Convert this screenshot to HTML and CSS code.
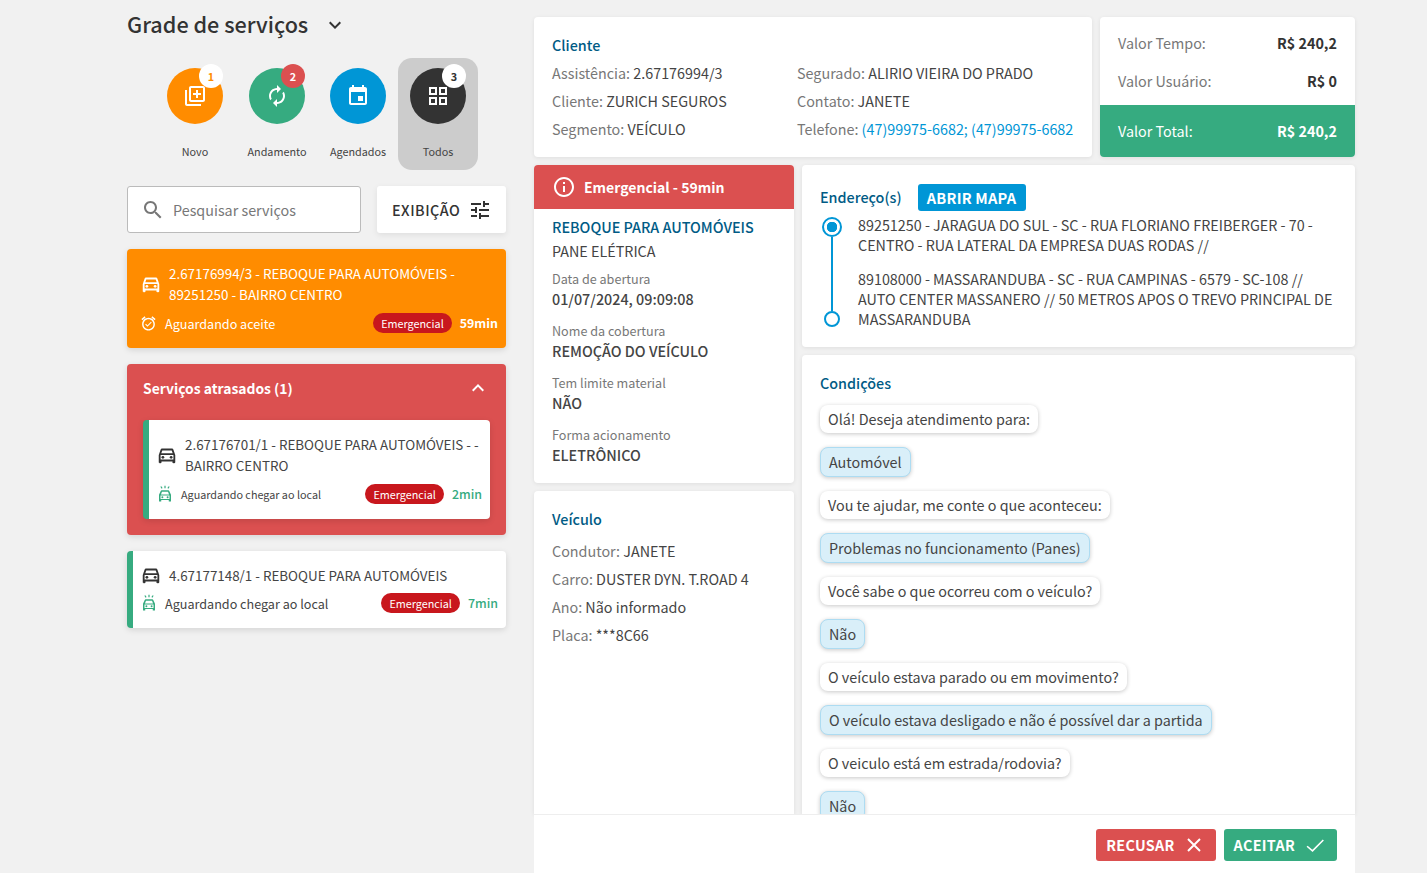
FILE: index.html
```html
<!DOCTYPE html>
<html lang="pt-BR">
<head>
<meta charset="utf-8">
<title>Grade de serviços</title>
<link rel="stylesheet" href="styles.css">
</head>
<body>
<div class="app">
  <aside class="side">
    <div class="side-title">
      <h1>Grade de serviços</h1>
      <svg class="ic ic-chev" viewBox="0 0 24 24"><path d="M7.41 8.59 12 13.17l4.59-4.58L18 10l-6 6-6-6z"/></svg>
    </div>
    <div class="tabs">
      <div class="tab">
        <div class="circle c-orange">
          <svg class="ic ic-tab" viewBox="0 0 24 24"><path d="M4 6H2v14c0 1.1.9 2 2 2h14v-2H4V6zm16-4H8c-1.1 0-2 .9-2 2v12c0 1.1.9 2 2 2h12c1.1 0 2-.9 2-2V4c0-1.1-.9-2-2-2zm0 14H8V4h12v12zm-7-2h2v-3h3V9h-3V6h-2v3h-3v2h3z"/></svg>
          <span class="count count-orange">1</span>
        </div>
        <span class="tab-label">Novo</span>
      </div>
      <div class="tab">
        <div class="circle c-green">
          <svg class="ic ic-tab" viewBox="0 0 24 24"><path d="M12 6v3l4-4-4-4v3c-4.42 0-8 3.58-8 8 0 1.57.46 3.03 1.24 4.26L6.7 14.8c-.45-.83-.7-1.79-.7-2.8 0-3.31 2.69-6 6-6zm6.76 1.74L17.3 9.2c.44.84.7 1.79.7 2.8 0 3.31-2.69 6-6 6v-3l-4 4 4 4v-3c4.42 0 8-3.58 8-8 0-1.57-.46-3.03-1.24-4.26z"/></svg>
          <span class="count count-red">2</span>
        </div>
        <span class="tab-label">Andamento</span>
      </div>
      <div class="tab">
        <div class="circle c-blue">
          <svg class="ic ic-tab" viewBox="0 0 24 24"><path d="M17 12h-5v5h5v-5zM16 1v2H8V1H6v2H5c-1.11 0-1.99.9-1.99 2L3 19c0 1.1.89 2 2 2h14c1.1 0 2-.9 2-2V5c0-1.1-.9-2-2-2h-1V1h-2zm3 18H5V8h14v11z"/></svg>
        </div>
        <span class="tab-label">Agendados</span>
      </div>
      <div class="tab tab-active">
        <div class="circle c-dark">
          <svg class="ic ic-tab" viewBox="0 0 24 24"><path d="M3 3v8h8V3H3zm6 6H5V5h4v4zm-6 4v8h8v-8H3zm6 6H5v-4h4v4zm4-16v8h8V3h-8zm6 6h-4V5h4v4zm-6 4v8h8v-8h-8zm6 6h-4v-4h4v4z"/></svg>
          <span class="count count-dark">3</span>
        </div>
        <span class="tab-label">Todos</span>
      </div>
    </div>
    <div class="tools">
      <div class="search">
        <svg class="ic ic-search" viewBox="0 0 24 24"><path d="M15.5 14h-.79l-.28-.27C15.41 12.59 16 11.11 16 9.5 16 5.91 13.09 3 9.5 3S3 5.91 3 9.5 5.91 16 9.5 16c1.61 0 3.09-.59 4.23-1.57l.27.28v.79l5 4.99L20.49 19l-4.99-5zm-6 0C7.01 14 5 11.99 5 9.5S7.01 5 9.5 5 14 7.01 14 9.5 11.99 14 9.5 14z"/></svg>
        <span>Pesquisar serviços</span>
      </div>
      <div class="view-btn">
        <span>EXIBIÇÃO</span>
        <svg class="ic ic-tune" viewBox="0 0 24 24"><path d="M3 17v2h6v-2H3zM3 5v2h10V5H3zm10 16v-2h8v-2h-8v-2h-2v6h2zM7 9v2H3v2h4v2h2V9H7zm14 4v-2H11v2h10zm-6-4h2V7h4V5h-4V3h-2v6z"/></svg>
      </div>
    </div>

    <div class="svc svc-orange">
      <div class="svc-top">
        <svg class="ic ic-car" viewBox="0 0 24 24"><path d="M18.92 6.01C18.72 5.42 18.16 5 17.5 5h-11c-.66 0-1.21.42-1.42 1.01L3 12v8c0 .55.45 1 1 1h1c.55 0 1-.45 1-1v-1h12v1c0 .55.45 1 1 1h1c.55 0 1-.45 1-1v-8l-2.08-5.99zM6.85 7h10.29l1.08 3.11H5.77L6.85 7zM19 17H5v-5h14v5z"/><circle cx="7.5" cy="14.5" r="1.5"/><circle cx="16.5" cy="14.5" r="1.5"/></svg>
        <p class="svc-text">2.67176994/3 - REBOQUE PARA AUTOMÓVEIS - 89251250 - BAIRRO CENTRO</p>
      </div>
      <div class="svc-bot">
        <svg class="ic ic-status" viewBox="0 0 24 24"><path d="M22 5.72l-4.6-3.86-1.29 1.53 4.6 3.86L22 5.72zM7.88 3.39L6.6 1.86 2 5.71l1.29 1.53 4.59-3.85zM12 4c-4.97 0-9 4.03-9 9s4.02 9 9 9c4.97 0 9-4.03 9-9s-4.03-9-9-9zm0 16c-3.87 0-7-3.13-7-7s3.13-7 7-7 7 3.13 7 7-3.13 7-7 7zm-1.46-5.47L8.41 12.4l-1.06 1.06 3.18 3.18 6-6-1.06-1.06-4.93 4.95z"/></svg>
        <span class="status">Aguardando aceite</span>
        <span class="pill">Emergencial</span>
        <span class="mins">59min</span>
      </div>
    </div>

    <div class="late">
      <div class="late-head">
        <span>Serviços atrasados (1)</span>
        <svg class="ic ic-chev-w" viewBox="0 0 24 24"><path d="M12 8l-6 6 1.41 1.41L12 10.83l4.59 4.58L18 14z"/></svg>
      </div>
      <div class="svc svc-white svc-nested">
        <div class="svc-top">
          <svg class="ic ic-car" viewBox="0 0 24 24"><path d="M18.92 6.01C18.72 5.42 18.16 5 17.5 5h-11c-.66 0-1.21.42-1.42 1.01L3 12v8c0 .55.45 1 1 1h1c.55 0 1-.45 1-1v-1h12v1c0 .55.45 1 1 1h1c.55 0 1-.45 1-1v-8l-2.08-5.99zM6.85 7h10.29l1.08 3.11H5.77L6.85 7zM19 17H5v-5h14v5z"/><circle cx="7.5" cy="14.5" r="1.5"/><circle cx="16.5" cy="14.5" r="1.5"/></svg>
          <p class="svc-text">2.67176701/1 - REBOQUE PARA AUTOMÓVEIS - - BAIRRO CENTRO</p>
        </div>
        <div class="svc-bot">
          <svg class="ic ic-status ic-green" viewBox="0 0 24 24"><path d="M11.2 1h1.6v3.200h-1.600zM5.800 2.400l1.300-.9 1.700 2.600-1.300.9zM15.200 4.100l1.700-2.600 1.300.9-1.700 2.600zM17.700 8.100C17.500 7.500 17 7 16.300 7H7.700C7 7 6.500 7.500 6.300 8.100L4 13v8.500c0 .3.200.500.500.500h2c.3 0 .500-.200.500-.500V20h10v1.500c0 .3.200.500.500.500h2c.3 0 .500-.200.500-.500V13l-2.300-4.900zM8 9h8l1.400 3.500H6.600L8 9zM18 18.500H6V14h12v4.500z"/><circle cx="8.500" cy="16.200" r="1.300"/><circle cx="15.500" cy="16.200" r="1.300"/></svg>
          <span class="status status-sm">Aguardando chegar ao local</span>
          <span class="pill">Emergencial</span>
          <span class="mins mins-green">2min</span>
        </div>
      </div>
    </div>

    <div class="svc svc-white svc-single">
      <div class="svc-top">
        <svg class="ic ic-car" viewBox="0 0 24 24"><path d="M18.92 6.01C18.72 5.42 18.16 5 17.5 5h-11c-.66 0-1.21.42-1.42 1.01L3 12v8c0 .55.45 1 1 1h1c.55 0 1-.45 1-1v-1h12v1c0 .55.45 1 1 1h1c.55 0 1-.45 1-1v-8l-2.08-5.99zM6.85 7h10.29l1.08 3.11H5.77L6.85 7zM19 17H5v-5h14v5z"/><circle cx="7.5" cy="14.5" r="1.5"/><circle cx="16.5" cy="14.5" r="1.5"/></svg>
        <p class="svc-text">4.67177148/1 - REBOQUE PARA AUTOMÓVEIS</p>
      </div>
      <div class="svc-bot">
        <svg class="ic ic-status ic-green" viewBox="0 0 24 24"><path d="M11.2 1h1.6v3.200h-1.600zM5.800 2.400l1.300-.9 1.700 2.600-1.300.9zM15.200 4.100l1.700-2.600 1.300.9-1.700 2.600zM17.700 8.100C17.500 7.500 17 7 16.300 7H7.700C7 7 6.500 7.500 6.300 8.100L4 13v8.500c0 .3.200.500.500.500h2c.3 0 .500-.200.500-.500V20h10v1.500c0 .3.200.500.500.500h2c.3 0 .500-.200.500-.500V13l-2.300-4.900zM8 9h8l1.400 3.500H6.600L8 9zM18 18.500H6V14h12v4.500z"/><circle cx="8.500" cy="16.200" r="1.300"/><circle cx="15.500" cy="16.200" r="1.300"/></svg>
        <span class="status">Aguardando chegar ao local</span>
        <span class="pill">Emergencial</span>
        <span class="mins mins-green">7min</span>
      </div>
    </div>
  </aside>

  <main class="main">
    <div class="row-top">
      <section class="card client">
        <h2 class="title">Cliente</h2>
        <div class="client-grid">
          <div class="line"><span class="lbl">Assistência:</span> 2.67176994/3</div>
          <div class="line"><span class="lbl">Segurado:</span> ALIRIO VIEIRA DO PRADO</div>
          <div class="line"><span class="lbl">Cliente:</span> ZURICH SEGUROS</div>
          <div class="line"><span class="lbl">Contato:</span> JANETE</div>
          <div class="line"><span class="lbl">Segmento:</span> VEÍCULO</div>
          <div class="line"><span class="lbl">Telefone:</span> <span class="phone">(47)99975-6682; (47)99975-6682</span></div>
        </div>
      </section>
      <section class="card values">
        <div class="val-rows">
          <div class="val-row"><span class="lbl">Valor Tempo:</span><b>R$ 240,2</b></div>
          <div class="val-row"><span class="lbl">Valor Usuário:</span><b>R$ 0</b></div>
        </div>
        <div class="val-total"><span>Valor Total:</span><b>R$ 240,2</b></div>
      </section>
    </div>

    <div class="row-body">
      <div class="col-left">
        <section class="card info">
          <div class="info-head">
            <svg class="ic ic-info" viewBox="0 0 24 24"><path d="M11 7h2v2h-2zm0 4h2v6h-2zm1-9C6.480 2 2 6.480 2 12s4.480 10 10 10 10-4.480 10-10S17.520 2 12 2zm0 18c-4.410 0-8-3.590-8-8s3.590-8 8-8 8 3.590 8 8-3.590 8-8 8z"/></svg>
            <span>Emergencial - 59min</span>
          </div>
          <div class="info-body">
            <div class="svc-name">REBOQUE PARA AUTOMÓVEIS</div>
            <div class="svc-sub">PANE ELÉTRICA</div>
            <div class="field"><div class="f-lbl">Data de abertura</div><div class="f-val">01/07/2024, 09:09:08</div></div>
            <div class="field"><div class="f-lbl">Nome da cobertura</div><div class="f-val">REMOÇÃO DO VEÍCULO</div></div>
            <div class="field"><div class="f-lbl">Tem limite material</div><div class="f-val">NÃO</div></div>
            <div class="field"><div class="f-lbl">Forma acionamento</div><div class="f-val">ELETRÔNICO</div></div>
          </div>
        </section>
        <section class="card vehicle">
          <h2 class="title">Veículo</h2>
          <div class="line"><span class="lbl">Condutor:</span> JANETE</div>
          <div class="line"><span class="lbl">Carro:</span> DUSTER DYN. T.ROAD 4</div>
          <div class="line"><span class="lbl">Ano:</span> Não informado</div>
          <div class="line"><span class="lbl">Placa:</span> ***8C66</div>
        </section>
      </div>

      <div class="col-right">
        <section class="card address">
          <div class="addr-head">
            <h2 class="title">Endereço(s)</h2>
            <span class="map-btn">ABRIR MAPA</span>
          </div>
          <div class="addr-list">
            <div class="track">
              <span class="dot dot-on"></span>
              <span class="track-line"></span>
              <span class="dot"></span>
            </div>
            <div class="addr-texts">
              <p>89251250 - JARAGUA DO SUL - SC - RUA FLORIANO FREIBERGER - 70 - CENTRO - RUA LATERAL DA EMPRESA DUAS RODAS //</p>
              <p>89108000 - MASSARANDUBA - SC - RUA CAMPINAS - 6579 - SC-108 // AUTO CENTER MASSANERO // 50 METROS APOS O TREVO PRINCIPAL DE MASSARANDUBA</p>
            </div>
          </div>
        </section>
        <section class="card cond">
          <h2 class="title">Condições</h2>
          <div class="chat">
            <span class="chip">Olá! Deseja atendimento para:</span>
            <span class="chip chip-a">Automóvel</span>
            <span class="chip">Vou te ajudar, me conte o que aconteceu:</span>
            <span class="chip chip-a">Problemas no funcionamento (Panes)</span>
            <span class="chip">Você sabe o que ocorreu com o veículo?</span>
            <span class="chip chip-a">Não</span>
            <span class="chip">O veículo estava parado ou em movimento?</span>
            <span class="chip chip-a">O veículo estava desligado e não é possível dar a partida</span>
            <span class="chip">O veiculo está em estrada/rodovia?</span>
            <span class="chip chip-a">Não</span>
          </div>
        </section>
      </div>
    </div>

    <footer class="foot">
      <span class="act act-red">RECUSAR
        <svg class="ic ic-act" viewBox="0 0 24 24"><path d="M4 4l16 16M20 4 4 20"/></svg>
      </span>
      <span class="act act-green">ACEITAR
        <svg class="ic ic-act ic-check" viewBox="0 0 24 24"><path d="M2.500 13.500 9 19 22 6"/></svg>
      </span>
    </footer>
  </main>
</div>
</body>
</html>
```
FILE: styles.css
```css
* { box-sizing: border-box; }
html, body { margin: 0; height: 100%; }
body {
  background: #f1f1f1;
  color: #444;
  font-family: "Noto Sans CJK SC", "Noto Sans", sans-serif;
  font-size: 14.35px;
  line-height: 20px;
  overflow: hidden;
}
h1, h2, p { margin: 0; }
.ic { display: block; fill: currentColor; flex: none; }

.app {
  display: flex;
  gap: 28px;
  height: 873px;
  padding: 0 72px 0 127px;
  overflow: hidden;
}

/* left column */
.side { width: 379px; flex: none; }
.side-title { display: flex; align-items: center; gap: 15px; height: 48px; color: #333; }
.side-title h1 { font-size: 21.6px; line-height: 30px; font-weight: 500; }
.ic-chev { width: 24px; height: 24px; margin-top: 2px; }

.tabs { display: flex; margin: 10px 0 16px 28px; }
.tab {
  width: 80px;
  height: 112px;
  padding-top: 10px;
  display: flex;
  flex-direction: column;
  align-items: center;
  border-radius: 14px;
}
.tab:nth-child(2) { width: 84px; }
.tab:nth-child(3) { width: 78px; margin-right: 1px; }
.tab-active { background: #ccc; }
.tab-label { font-size: 10.8px; line-height: 16px; margin-top: 19px; color: #444; }
.circle {
  position: relative;
  width: 56px;
  height: 56px;
  border-radius: 50%;
  display: flex;
  align-items: center;
  justify-content: center;
  color: #fff;
}
.c-orange { background: #ff8c00; }
.c-green { background: #36ab80; }
.c-blue { background: #0096d6; }
.c-dark { background: #333; }
.ic-tab { width: 24px; height: 24px; }
.count {
  position: absolute;
  top: -4px;
  right: 0;
  width: 24px;
  height: 24px;
  border-radius: 50%;
  display: flex;
  align-items: center;
  justify-content: center;
  font-size: 10.8px;
  font-weight: 700;
  background: #fff;
}
.count-orange { color: #ff8c00; }
.count-red { background: #db5050; color: #fff; }
.count-dark { color: #333; }

.tools { display: flex; gap: 16px; margin-bottom: 16px; }
.search {
  width: 234px;
  height: 47px;
  display: flex;
  align-items: center;
  gap: 8px;
  padding-left: 13px;
  background: #fff;
  border: 1px solid #bbb;
  border-radius: 3px;
  color: #777;
}
.ic-search { width: 24px; height: 24px; color: #777; }
.view-btn {
  flex: 1;
  height: 47px;
  display: flex;
  align-items: center;
  gap: 8px;
  padding-left: 15px;
  background: #fff;
  border-radius: 3px;
  box-shadow: 0 2px 6px rgba(0,0,0,.08);
  font-weight: 500;
  letter-spacing: .5px;
  color: #333;
}
.ic-tune { width: 24px; height: 24px; color: #333; }

.svc {
  border-radius: 4px;
  box-shadow: 0 2px 6px rgba(0,0,0,.12);
  font-size: 13.4px;
  line-height: 21px;
}
.svc-orange { background: #ff8c00; color: #fff; height: 99px; padding: 14px 8px 0 13px; margin-bottom: 16px; }
.svc-white { background: #fff; color: #444; border-left: 6px solid #36ab80; height: 77px; padding: 14px 8px 0 7px; }
.svc-single { padding-top: 13px; }
.svc-top { display: flex; align-items: center; gap: 7px; }
.svc-bot { display: flex; align-items: center; margin-top: 8px; height: 20px; }
.svc-single .svc-bot { margin-top: 7px; }
.ic-car { width: 22px; height: 22px; color: #333; }
.svc-orange .ic-car, .svc-orange .ic-status { color: #fff; }
.ic-status { width: 17px; height: 17px; margin-right: 8px; }
.ic-green { width: 18px; height: 18px; margin-right: 7px; color: #36ab80; }
.status { flex: 1; font-size: 12.6px; }
.status-sm { font-size: 10.8px; }
.pill {
  height: 20px;
  padding: 0 8px;
  border-radius: 10px;
  background: #c8171d;
  color: #fff;
  font-size: 10.8px;
  line-height: 20px;
}
.mins { margin-left: 8px; text-align: right; font-weight: 700; font-size: 12.4px; }
.mins-green { color: #36ab80; font-weight: 500; }

.late {
  background: #db5050;
  border-radius: 4px;
  box-shadow: 0 2px 6px rgba(0,0,0,.12);
  padding: 0 16px 16px;
  margin-bottom: 16px;
}
.late-head {
  display: flex;
  align-items: center;
  justify-content: space-between;
  height: 56px;
  padding-bottom: 9px;
  color: #fff;
  font-size: 13.9px;
  font-weight: 700;
}
.ic-chev-w { width: 24px; height: 24px; }
.svc-nested { height: 99px; padding-top: 14px; }

/* right area */
.main { width: 821px; flex: none; display: flex; flex-direction: column; padding-top: 17px; }
.card { background: #fff; border-radius: 4px; box-shadow: 0 1px 4px rgba(0,0,0,.08); }
.title { font-size: 14.35px; line-height: 20px; font-weight: 500; color: #005b85; }
.lbl { color: #777; }
.line { line-height: 28px; height: 28px; white-space: nowrap; }

.row-top { display: flex; gap: 8px; height: 140px; flex: none; }
.client { width: 558px; padding: 18px 18px 0; }
.client-grid { display: grid; grid-template-columns: 245px 1fr; margin-top: 4px; }
.phone { color: #0096d6; }
.values { flex: 1; display: flex; flex-direction: column; overflow: hidden; }
.val-rows { flex: 1; padding: 7px 18px 0; }
.val-row { display: flex; justify-content: space-between; height: 38px; align-items: center; }
.val-row b { font-weight: 700; color: #333; }
.val-total {
  height: 52px;
  flex: none;
  background: #36ab80;
  color: #fff;
  display: flex;
  align-items: center;
  justify-content: space-between;
  padding: 0 18px;
}
.val-total b { font-weight: 700; }

.row-body { flex: 1; min-height: 0; display: flex; gap: 8px; margin-top: 8px; }
.col-left { width: 260px; flex: none; display: flex; flex-direction: column; gap: 8px; }
.col-right { flex: 1; display: flex; flex-direction: column; gap: 8px; min-width: 0; }

.info { height: 318px; flex: none; overflow: hidden; }
.info-head {
  height: 44px;
  background: #db5050;
  color: #fff;
  font-size: 14px;
  font-weight: 700;
  display: flex;
  align-items: center;
  gap: 8px;
  padding-left: 18px;
}
.ic-info { width: 24px; height: 24px; }
.info-body { padding: 8px 18px 0; }
.svc-name { font-weight: 500; color: #005b85; }
.svc-sub { margin-top: 4px; }
.field { margin-top: 8px; margin-bottom: 12px; }
.field + .field { margin-top: 0; }
.f-lbl { font-size: 12.6px; color: #777; }
.f-val { font-weight: 500; color: #444; }

.vehicle { flex: 1; padding: 18px 18px 0; border-radius: 4px 4px 0 0; }
.vehicle .title { margin-bottom: 8px; }

.address { height: 182px; flex: none; padding: 19px 14px 0 18px; }
.addr-head { display: flex; align-items: center; gap: 16px; margin-bottom: 4px; }
.addr-head .title { margin-top: -2px; }
.map-btn {
  width: 108px;
  height: 27px;
  background: #0096d6;
  color: #fff;
  border-radius: 3px;
  display: flex;
  align-items: center;
  justify-content: center;
  font-size: 14.6px;
  letter-spacing: .2px;
  font-weight: 700;
}
.addr-list { display: flex; gap: 14px; }
.track { width: 24px; flex: none; display: flex; flex-direction: column; align-items: center; padding-top: 2px; }
.dot { width: 16px; height: 16px; border: 2px solid #0096d6; border-radius: 50%; flex: none; background: #fff; }
.dot-on { width: 20px; height: 20px; background: radial-gradient(circle, #0096d6 0 5px, #fff 5.5px); }
.track-line { width: 2px; height: 74px; background: #0096d6; }
.addr-texts p + p { margin-top: 14px; }

.cond { flex: 1; min-height: 0; overflow: hidden; padding: 18px 18px 0; border-radius: 4px 4px 0 0; }
.chat { display: flex; flex-direction: column; align-items: flex-start; gap: 14px; margin-top: 12px; }
.chip {
  height: 28px;
  padding: 0 8px;
  background: #fff;
  border-radius: 8px;
  box-shadow: 0 1px 4px rgba(0,0,0,.22);
  line-height: 28px;
  white-space: nowrap;
}
.chip-a { height: 30px; line-height: 28px; background: #d9eff9; border: 1px solid #addcf2; }

.foot {
  height: 59px;
  flex: none;
  background: #fff;
  border-top: 1px solid #eee;
  display: flex;
  justify-content: flex-end;
  align-items: center;
  gap: 8px;
  padding: 1px 18px 0 0;
}
.act {
  height: 32px;
  display: flex;
  align-items: center;
  gap: 10px;
  padding: 0 13px 0 10px;
  border-radius: 3px;
  color: #fff;
  font-weight: 700;
  letter-spacing: .3px;
}
.act-red { background: #db5050; }
.act-green { background: #36ab80; padding-right: 12px; }
.ic-act { width: 18px; height: 18px; fill: none; stroke: currentColor; stroke-width: 2.6; }
.ic-check { width: 20px; height: 20px; stroke-width: 1.9; }
```
